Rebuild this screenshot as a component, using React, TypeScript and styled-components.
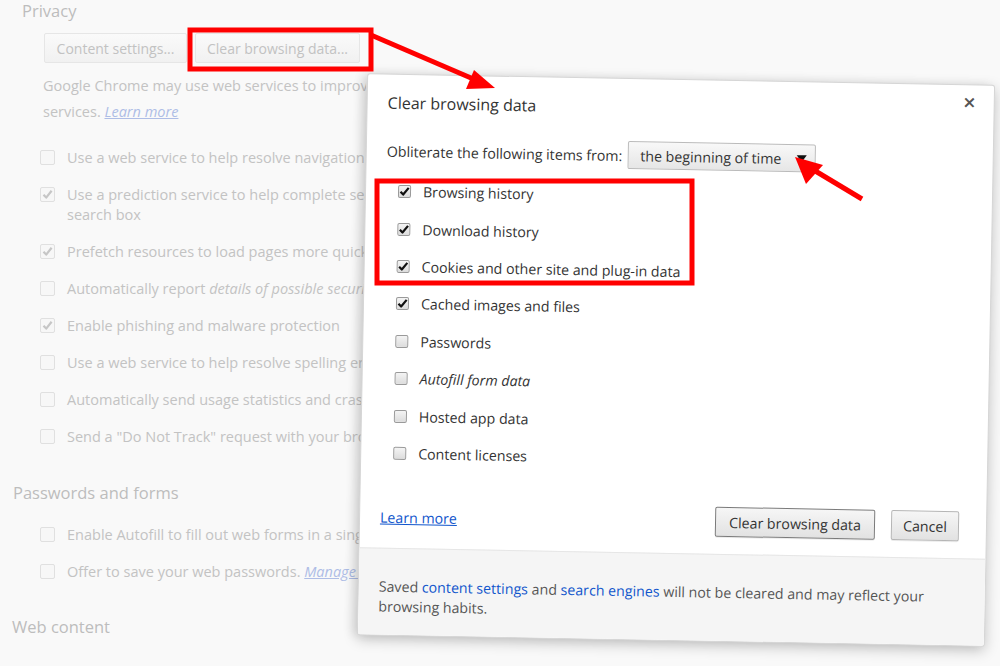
import styled, { createGlobalStyle } from 'styled-components';

const GlobalStyle = createGlobalStyle`
  html, body {
    margin: 0;
    padding: 0;
    background: #fff;
  }
  body {
    font-family: 'Open Sans', 'Noto Sans', sans-serif;
  }
`;

type Item = { label: React.ReactNode; checked: boolean };

const privacyItems: Item[] = [
    { label: 'Use a web service to help resolve navigation errors', checked: false },
    {
        label: (
            <>
                Use a prediction service to help complete searches and URLs typed in the address bar or the app launcher
                <br />
                search box
            </>
        ),
        checked: true,
    },
    { label: 'Prefetch resources to load pages more quickly', checked: true },
    {
        label: (
            <>
                Automatically report <i>details of possible security incidents</i> to Google
            </>
        ),
        checked: false,
    },
    { label: 'Enable phishing and malware protection', checked: true },
    { label: 'Use a web service to help resolve spelling errors', checked: false },
    { label: 'Automatically send usage statistics and crash reports to Google', checked: false },
    { label: 'Send a "Do Not Track" request with your browsing traffic', checked: false },
];

const dataItems: Item[] = [
    { label: 'Browsing history', checked: true },
    { label: 'Download history', checked: true },
    { label: 'Cookies and other site and plug-in data', checked: true },
    { label: 'Cached images and files', checked: true },
    { label: 'Passwords', checked: false },
    { label: <i>Autofill form data</i>, checked: false },
    { label: 'Hosted app data', checked: false },
    { label: 'Content licenses', checked: false },
];

const Tick = ({ color }: { color: string }) => (
    <svg width="11" height="11" viewBox="0 0 11 11">
        <path d="M1.5 5.8 L4.2 8.6 L9.6 1.8" fill="none" stroke={color} strokeWidth="2.2" strokeLinejoin="round" />
    </svg>
);

const App = () => {
    return (
        <>
            <GlobalStyle />
            <Page>
                <Settings>
                    <SectionTitle $indent={10}>Privacy</SectionTitle>
                    <GhostButtons>
                        <GhostButton $width={143}>Content settings...</GhostButton>
                        <GhostButton $width={165}>Clear browsing data...</GhostButton>
                    </GhostButtons>
                    <Description>
                        Google Chrome may use web services to improve your browsing experience. You may optionally disable these
                        <br />
                        services. <GhostLink>Learn more</GhostLink>
                    </Description>
                    <GhostList>
                        {privacyItems.map((item, i) => (
                            <GhostRow key={i}>
                                <GhostBox>{item.checked && <Tick color="#c6c6c6" />}</GhostBox>
                                <GhostLabel>{item.label}</GhostLabel>
                            </GhostRow>
                        ))}
                    </GhostList>
                    <SectionTitle $indent={1} $gap={27}>
                        Passwords and forms
                    </SectionTitle>
                    <GhostList $gap={12}>
                        <GhostRow>
                            <GhostBox />
                            <GhostLabel>Enable Autofill to fill out web forms in a single click.</GhostLabel>
                        </GhostRow>
                        <GhostRow>
                            <GhostBox />
                            <GhostLabel>
                                Offer to save your web passwords. <GhostLink as="span">Manage passwords</GhostLink>
                            </GhostLabel>
                        </GhostRow>
                    </GhostList>
                    <SectionTitle $indent={0} $gap={26}>
                        Web content
                    </SectionTitle>
                </Settings>

                <Dialog>
                    <Header>
                        <Title>Clear browsing data</Title>
                        <Close>×</Close>
                    </Header>
                    <Body>
                        <RangeRow>
                            <span>Obliterate the following items from:</span>
                            <Select>
                                <span>the beginning of time</span>
                                <Caret />
                            </Select>
                        </RangeRow>
                        <DataList>
                            {dataItems.map((item, i) => (
                                <DataRow key={i}>
                                    <Box>{item.checked && <Tick color="#111" />}</Box>
                                    <span>{item.label}</span>
                                </DataRow>
                            ))}
                        </DataList>
                        <Actions>
                            <Link>Learn more</Link>
                            <Buttons>
                                <Button $focused $width={160}>
                                    Clear browsing data
                                </Button>
                                <Button $width={68}>Cancel</Button>
                            </Buttons>
                        </Actions>
                    </Body>
                    <Footer>
                        Saved <FooterLink>content settings</FooterLink> and <FooterLink>search engines</FooterLink> will not be cleared
                        and may reflect your
                        <br />
                        browsing habits.
                    </Footer>
                </Dialog>

                {/* red annotations drawn over the screenshot */}
                <Marks viewBox="0 0 1000 666">
                    <g fill="none" stroke="#f00" strokeWidth="5">
                        <rect x="190" y="30" width="181" height="39" />
                        <rect x="377" y="181" width="315" height="102" />
                        <line x1="371" y1="35" x2="478" y2="81" />
                        <line x1="862" y1="199" x2="812" y2="169" />
                    </g>
                    <g fill="#f00">
                        <polygon points="495,88 466,89 474,70" />
                        <polygon points="795,157 823,165 806,184" />
                    </g>
                </Marks>
            </Page>
        </>
    );
};

const Page = styled.div`
    position: relative;
    width: 1000px;
    height: 666px;
    overflow: hidden;
    background: #f9f9f9;
`;

const Settings = styled.div`
    width: 366px;
    overflow: hidden;
    display: flex;
    flex-direction: column;
    padding-left: 12px;
    box-sizing: border-box;
    color: #c3c3c3;
    font-size: 14.5px;
    white-space: nowrap;
`;

const SectionTitle = styled.div<{ $indent: number; $gap?: number }>`
    margin-left: ${({ $indent }) => $indent}px;
    margin-top: ${({ $gap }) => $gap ?? 0}px;
    font-size: 16.5px;
    line-height: 22px;
    color: #bdbdbd;
`;

const GhostButtons = styled.div`
    display: flex;
    gap: 8px;
    margin: 11px 0 0 32px;
`;

const GhostButton = styled.div<{ $width: number }>`
    width: ${({ $width }) => $width}px;
    height: 30px;
    flex: none;
    box-sizing: border-box;
    display: flex;
    align-items: center;
    justify-content: center;
    border: 1px solid #e6e6e6;
    border-radius: 2px;
    background: linear-gradient(#fafafa, #f1f1f1);
    font-size: 14px;
    color: #c2c2c2;
`;

const Description = styled.div`
    margin: 10px 0 0 31px;
    line-height: 26px;
`;

const GhostLink = styled.a`
    color: #aebde6;
    text-decoration: underline;
    font-style: italic;
`;

const GhostList = styled.div<{ $gap?: number }>`
    display: flex;
    flex-direction: column;
    margin: ${({ $gap }) => $gap ?? 14}px 0 0 28px;
`;

const GhostRow = styled.div`
    display: flex;
    align-items: flex-start;
    gap: 12px;
    padding: 8.5px 0;
    line-height: 20px;
`;

const GhostBox = styled.div`
    width: 15px;
    height: 15px;
    margin-top: 2px;
    flex: none;
    box-sizing: border-box;
    border: 1px solid #e0e0e0;
    border-radius: 2px;
    background: #f7f7f7;
    display: flex;
    align-items: center;
    justify-content: center;
`;

const GhostLabel = styled.div`
    color: #c3c3c3;
`;

const Dialog = styled.div`
    position: absolute;
    left: 362px;
    top: 79px;
    width: 628px;
    height: 562px;
    display: flex;
    flex-direction: column;
    background: #fff;
    border: 1px solid #d6d6d6;
    border-radius: 3px;
    box-sizing: border-box;
    box-shadow: 0 4px 14px rgba(0, 0, 0, 0.22), -6px 0 10px rgba(0, 0, 0, 0.06);
    transform: rotate(1.05deg);
    overflow: hidden;
    color: #333;
    font-size: 14.2px;
`;

const Header = styled.div`
    display: flex;
    justify-content: space-between;
    padding: 17px 18px 0 20px;
`;

const Title = styled.div`
    font-size: 16px;
    line-height: 22px;
    color: #333;
`;

const Close = styled.div`
    margin-top: -12px;
    font-size: 22px;
    line-height: 22px;
    font-weight: 600;
    color: #555;
`;

const Body = styled.div`
    flex: 1;
    display: flex;
    flex-direction: column;
    padding: 0 27px 17px 20px;
`;

const RangeRow = styled.div`
    display: flex;
    align-items: center;
    gap: 5px;
    margin-top: 23px;
    height: 28px;
`;

const Select = styled.div`
    width: 188px;
    height: 28px;
    box-sizing: border-box;
    display: flex;
    align-items: center;
    justify-content: space-between;
    padding: 0 8px 0 12px;
    border: 1px solid #bbb;
    border-radius: 2px;
    background: linear-gradient(#f8f8f8, #e6e6e6);
    color: #333;
`;

const Caret = styled.div`
    width: 0;
    height: 0;
    border-left: 5px solid transparent;
    border-right: 5px solid transparent;
    border-top: 7px solid #111;
`;

const DataList = styled.div`
    display: flex;
    flex-direction: column;
    margin: 8px 0 0 12px;
`;

const DataRow = styled.div`
    display: flex;
    align-items: center;
    gap: 12px;
    height: 37.4px;
`;

const Box = styled.div`
    width: 13px;
    height: 13px;
    flex: none;
    box-sizing: border-box;
    border: 1px solid #9a9a9a;
    border-radius: 2px;
    background: linear-gradient(#f4f4f4, #dcdcdc);
    display: flex;
    align-items: center;
    justify-content: center;
`;

const Actions = styled.div`
    margin-top: auto;
    display: flex;
    align-items: center;
    justify-content: space-between;
`;

const Link = styled.a`
    color: #15c;
    text-decoration: underline;
    margin-top: 3px;
`;

const Buttons = styled.div`
    display: flex;
    gap: 16px;
`;

const Button = styled.div<{ $width: number; $focused?: boolean }>`
    width: ${({ $width }) => $width}px;
    height: 30px;
    box-sizing: border-box;
    display: flex;
    align-items: center;
    justify-content: center;
    border: 1px solid ${({ $focused }) => ($focused ? '#7a7a7a' : '#b5b5b5')};
    border-radius: 2px;
    background: linear-gradient(#f6f6f6, #e2e2e2);
    box-shadow: 0 1px 0 rgba(0, 0, 0, 0.08);
    color: #333;
`;

const Footer = styled.div`
    height: 87px;
    box-sizing: border-box;
    padding: 28px 20px 0;
    border-top: 1px solid #e6e6e6;
    background: #f5f5f5;
    line-height: 20px;
    color: #555;
`;

const FooterLink = styled.span`
    color: #15c;
`;

const Marks = styled.svg`
    position: absolute;
    inset: 0;
    width: 1000px;
    height: 666px;
    pointer-events: none;
`;

export default App;
